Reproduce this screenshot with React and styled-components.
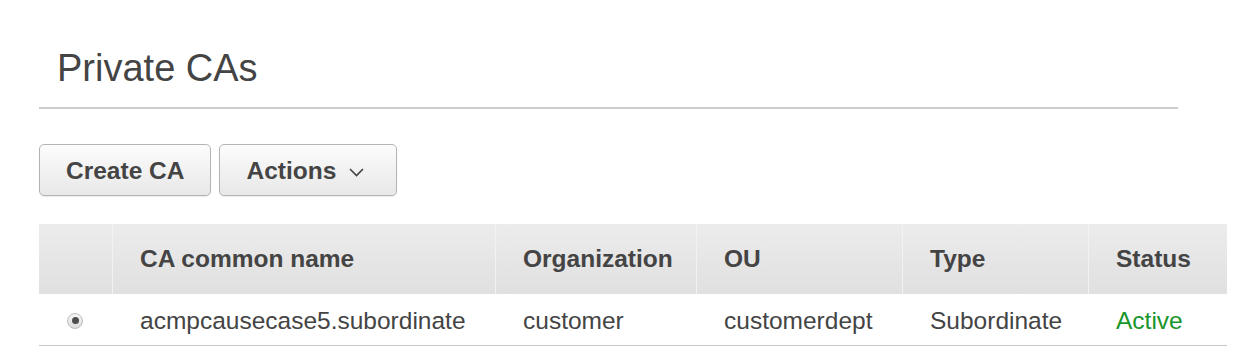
import React from "react";
import styled, { createGlobalStyle } from "styled-components";

const Global = createGlobalStyle`
  html, body { margin: 0; padding: 0; background: #fff; }
  body { font-family: "Liberation Sans", Arial, Helvetica, sans-serif; color: #444; }
`;

const Page = styled.div`
  padding: 0 0 0 39px;
  width: 1257px;
  box-sizing: border-box;
`;

const Title = styled.h1`
  margin: 46px 0 0 18px;
  font-size: 38px;
  line-height: 44px;
  font-weight: normal;
  color: #444;
`;

const Rule = styled.div`
  width: 1139px;
  height: 2px;
  background: #cccccc;
  margin-top: 17px;
`;

const Toolbar = styled.div`
  display: flex;
  gap: 8px;
  margin-top: 35px;
`;

const Button = styled.button`
  display: flex;
  align-items: center;
  height: 52px;
  box-sizing: border-box;
  padding: 2px ${(p) => (p.$wide ? "32px" : "26px")} 0 26px;
  border: 1px solid #b4b4b4;
  border-radius: 5px;
  background: linear-gradient(#fcfcfc, #e8e8e8);
  box-shadow: 0 1px 1px rgba(0, 0, 0, 0.08);
  font-family: "Liberation Sans", Arial, Helvetica, sans-serif;
  font-size: 24.5px;
  font-weight: bold;
  color: #444;
  cursor: pointer;
`;

const Chevron = styled.svg`
  margin-left: 13px;
  width: 15px;
  height: 9px;
  margin-top: 2px;
`;

const Table = styled.div`
  margin-top: 28px;
  width: 1188px;
`;

const cols = "74px 383px 201px 206px 186px 138px";

const HeaderRow = styled.div`
  display: grid;
  grid-template-columns: ${cols};
  height: 70px;
  background: linear-gradient(#ececec, #e0e0e0);
`;

const HeaderCell = styled.div`
  display: flex;
  align-items: center;
  padding-left: 27px;
  font-size: 24.5px;
  font-weight: bold;
  color: #444;
  border-left: ${(p) => (p.$first ? "none" : "1px solid #f2f2f2")};
  margin-left: ${(p) => (p.$first ? "0" : "-1px")};
`;

const BodyRow = styled.div`
  display: grid;
  grid-template-columns: ${cols};
  height: 52px;
  box-sizing: border-box;
  border-bottom: 1px solid #c8c8c8;
`;

const Cell = styled.div`
  display: flex;
  align-items: center;
  justify-content: ${(p) => (p.$center ? "center" : "flex-start")};
  padding-left: ${(p) => (p.$center ? "0" : "27px")};
  padding-top: 2px;
  font-size: 24.5px;
  color: ${(p) => (p.$status ? "#17962b" : "#444")};
`;

const Radio = styled.span`
  position: relative;
  width: 16px;
  height: 16px;
  border-radius: 50%;
  box-sizing: border-box;
  border: 1px solid #bdbdbd;
  background: linear-gradient(#f6f6f6, #dcdcdc);
  margin-right: 2px;
  &::after {
    content: "";
    position: absolute;
    left: 3.5px;
    top: 3.5px;
    width: 7px;
    height: 7px;
    border-radius: 50%;
    background: #4e4e4e;
  }
`;

export default function App() {
  const headers = ["", "CA common name", "Organization", "OU", "Type", "Status"];
  return (
    <>
      <Global />
      <Page>
        <Title>Private CAs</Title>
        <Rule />
        <Toolbar>
          <Button>Create CA</Button>
          <Button $wide>
            Actions
            <Chevron viewBox="0 0 15 9">
              <polyline points="1,1 7.5,7.5 14,1" fill="none" stroke="#444" strokeWidth="1.6" />
            </Chevron>
          </Button>
        </Toolbar>
        <Table>
          <HeaderRow>
            {headers.map((h, i) => (
              <HeaderCell key={i} $first={i === 0}>
                {h}
              </HeaderCell>
            ))}
          </HeaderRow>
          <BodyRow>
            <Cell $center>
              <Radio />
            </Cell>
            <Cell>acmpcausecase5.subordinate</Cell>
            <Cell>customer</Cell>
            <Cell>customerdept</Cell>
            <Cell>Subordinate</Cell>
            <Cell $status>Active</Cell>
          </BodyRow>
        </Table>
      </Page>
    </>
  );
}
